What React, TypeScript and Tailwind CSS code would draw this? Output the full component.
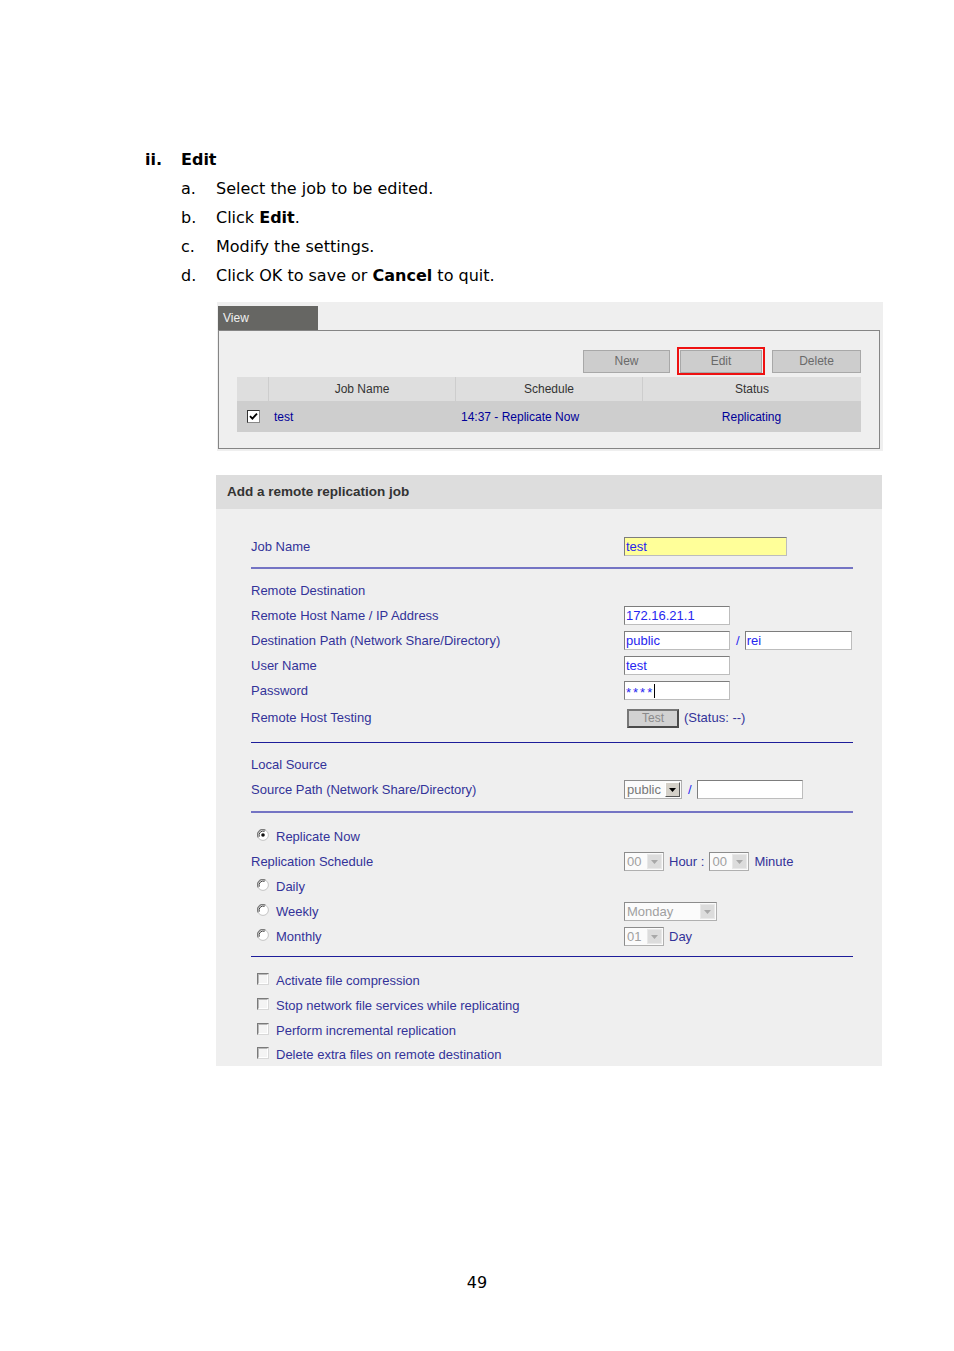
import React from 'react';

const Radio = ({ checked = false }: { checked?: boolean }) => (
  <svg width="12" height="12" viewBox="0 0 12 12" className="shrink-0">
    <circle cx="6" cy="6" r="5.4" fill="#fff" stroke="#c4c4c4" strokeWidth="1" />
    <path d="M1.2 8.4 A5.3 5.3 0 0 1 8.4 1.2" stroke="#7c7c7c" strokeWidth="1.2" fill="none" />
    <path d="M2.3 7.6 A4.1 4.1 0 0 1 7.6 2.3" stroke="#3c3c3c" strokeWidth="1" fill="none" />
    {checked && <circle cx="6" cy="6" r="1.8" fill="#111" />}
  </svg>
);

const Check = () => (
  <div className="h-[12px] w-[12px] shrink-0 border border-t-[#7a7a7a] border-l-[#7a7a7a] border-r-[#d8d8d8] border-b-[#d8d8d8] bg-[#f4f4f4]">
    <div className="h-full w-full border border-t-[#b8b8b8] border-l-[#b8b8b8] border-r-white border-b-white" />
  </div>
);

const Arrow = ({ dark = false }: { dark?: boolean }) => (
  <svg width="7" height="4" viewBox="0 0 7 4">
    <path d="M0 0 H7 L3.5 4 Z" fill={dark ? '#000' : '#a8a8a8'} />
  </svg>
);

const Select = ({ value, className, enabled = false }: { value: string; className: string; enabled?: boolean }) => (
  <div className={`flex h-[19px] items-center border border-[#b0b0b0] border-t-[#8c8c8c] border-l-[#8c8c8c] bg-[#fbfbfb] ${className}`}>
    <span className={`flex-1 pl-[2px] text-[13px] leading-none ${enabled ? 'text-[#777]' : 'text-[#a0a0a0]'}`}>{value}</span>
    {enabled ? (
      <span className="m-[1px] flex h-[15px] w-[15px] items-center justify-center border border-t-white border-l-white border-r-[#555] border-b-[#555] bg-[#d4d0c8]">
        <Arrow dark />
      </span>
    ) : (
      <span className="m-[1px] flex h-[15px] w-[15px] items-center justify-center border border-[#e8e8e8] bg-[#dcdcdc]">
        <Arrow />
      </span>
    )}
  </div>
);

const TextBox = ({ value, className, bg = 'bg-white' }: { value?: React.ReactNode; className: string; bg?: string }) => (
  <div className={`flex h-[19px] items-center border border-[#bdbdbd] border-t-[#7d7d7d] border-l-[#7d7d7d] pl-[1px] text-[13px] leading-none text-[#2626f0] ${bg} ${className}`}>
    {value}
  </div>
);

const Line = ({ dark = false }: { dark?: boolean }) => (
  <div className={`w-[602px] ${dark ? 'h-[1px] bg-[#1d1d9a]' : 'h-[2px] bg-[#7474c4]'}`} />
);

const Row = ({ label, children, className = 'h-[25px]' }: { label: React.ReactNode; children?: React.ReactNode; className?: string }) => (
  <div className={`flex items-center ${className}`}>
    <div className="flex w-[373px] items-center">{label}</div>
    <div className="flex items-center">{children}</div>
  </div>
);

const Option = ({ text, radio, checked }: { text: string; radio?: boolean; checked?: boolean }) => (
  <div className="flex items-center pl-[6px]">
    <span className="-mt-[3px]">{radio ? <Radio checked={checked} /> : <Check />}</span>
    <span className="ml-[7px]">{text}</span>
  </div>
);

const ViewPanel = () => (
  <div className="ml-[217px] mt-[12px] h-[149px] w-[666px] bg-[#efefef] pl-[1px] pt-[4px] font-['Liberation_Sans',Arial,sans-serif] text-[12px]">
    <div className="flex h-[24px] w-[100px] items-center bg-[#666663] pl-[5px] text-[#f0f0f0]">View</div>
    <div className="h-[119px] w-[662px] border border-[#858585] px-[18px] pt-[16px]">
      <div className="flex h-[28px] items-center justify-end">
        <div className="flex h-[23px] w-[87px] items-center justify-center border border-[#a8a8a8] bg-[#cdcdcd] text-[#6a6a6a]">New</div>
        <div className="ml-[7px] flex h-[28px] w-[88px] items-center justify-center border-2 border-[#ee1111]">
          <div className="flex h-[23px] w-[82px] items-center justify-center border border-[#a8a8a8] bg-[#cdcdcd] text-[#6a6a6a]">Edit</div>
        </div>
        <div className="ml-[7px] flex h-[23px] w-[89px] items-center justify-center border border-[#a8a8a8] bg-[#cdcdcd] text-[#6a6a6a]">Delete</div>
      </div>
      <div className="mt-[2px] w-[624px]">
        <div className="grid h-[24px] grid-cols-[31px_187px_187px_219px] bg-[#dedede] text-[#333]">
          <div />
          <div className="flex items-center justify-center border-l border-[#cdcdcd]">Job Name</div>
          <div className="flex items-center justify-center border-l border-[#cdcdcd]">Schedule</div>
          <div className="flex items-center justify-center border-l border-[#cdcdcd]">Status</div>
        </div>
        <div className="grid h-[31px] grid-cols-[31px_187px_187px_219px] bg-[#cecece] text-[#000099]">
          <div className="flex items-center pl-[10px]">
            <div className="flex h-[13px] w-[13px] items-center justify-center border border-[#333] border-r-[#888] border-b-[#888] bg-white">
              <svg width="9" height="9" viewBox="0 0 9 9">
                <path d="M1 4.2 L3.4 6.6 L8 1.6" stroke="#000" strokeWidth="1.8" fill="none" />
              </svg>
            </div>
          </div>
          <div className="flex items-center pl-[6px]">test</div>
          <div className="flex items-center pl-[6px]">14:37 - Replicate Now</div>
          <div className="flex items-center justify-center">Replicating</div>
        </div>
      </div>
    </div>
  </div>
);

const JobPanel = () => (
  <div className="ml-[216px] mt-[24px] w-[666px] bg-[#efefef] font-['Liberation_Sans',Arial,sans-serif] text-[13px] text-[#333399]">
    <div className="flex h-[34px] items-center bg-[#dddddd] pl-[11px] text-[13.5px] font-bold text-[#333]">Add a remote replication job</div>
    <div className="pl-[35px] pt-[25px]">
      <Row label="Job Name">
        <TextBox value="test" className="w-[163px]" bg="bg-[#ffff99]" />
      </Row>
      <div className="mt-[8px]"><Line /></div>
      <div className="mt-[9px]">
        <Row label="Remote Destination" />
        <Row label="Remote Host Name / IP Address">
          <TextBox value="172.16.21.1" className="w-[106px]" />
        </Row>
        <Row label="Destination Path (Network Share/Directory)">
          <TextBox value="public" className="w-[106px]" />
          <span className="ml-[6px] text-[#2626f0]">/</span>
          <TextBox value="rei" className="ml-[5px] w-[107px]" />
        </Row>
        <Row label="User Name">
          <TextBox value="test" className="w-[106px]" />
        </Row>
        <Row label="Password">
          <TextBox
            value={
              <>
                <span className="pt-[4px] text-[13px] tracking-[2px]">****</span>
                <span className="h-[14px] w-[1px] bg-black" />
              </>
            }
            className="w-[106px]"
          />
        </Row>
        <Row label="Remote Host Testing" className="h-[30px]">
          <div className="ml-[3px] flex h-[19px] w-[52px] items-center justify-center border-2 border-[#4a4a4a] border-t-[#777] border-l-[#777] bg-[#d2d2d2] text-[12px] text-[#8a8a8a]">Test</div>
          <span className="ml-[5px]">(Status: --)</span>
        </Row>
      </div>
      <div className="mt-[9px]"><Line dark /></div>
      <div className="mt-[9px]">
        <Row label="Local Source" />
        <Row label="Source Path (Network Share/Directory)">
          <Select value="public" className="w-[58px]" enabled />
          <span className="ml-[6px] text-[#2626f0]">/</span>
          <TextBox className="ml-[5px] w-[106px]" />
        </Row>
      </div>
      <div className="mt-[9px]"><Line /></div>
      <div className="mt-[11px]">
        <Row label={<Option text="Replicate Now" radio checked />} />
        <Row label="Replication Schedule">
          <Select value="00" className="w-[40px]" />
          <span className="ml-[5px]">Hour :</span>
          <Select value="00" className="ml-[5px] w-[40px]" />
          <span className="ml-[5px]">Minute</span>
        </Row>
        <Row label={<Option text="Daily" radio />} />
        <Row label={<Option text="Weekly" radio />}>
          <Select value="Monday" className="w-[93px]" />
        </Row>
        <Row label={<Option text="Monthly" radio />}>
          <Select value="01" className="w-[40px]" />
          <span className="ml-[5px]">Day</span>
        </Row>
      </div>
      <div className="mt-[7px]"><Line dark /></div>
      <div className="mt-[11px]">
        <Row label={<Option text="Activate file compression" />} />
        <Row label={<Option text="Stop network file services while replicating" />} />
        <Row label={<Option text="Perform incremental replication" />} />
        <Row label={<Option text="Delete extra files on remote destination" />} className="h-[23px]" />
      </div>
    </div>
  </div>
);

export default function App() {
  return (
    <div className="min-h-[1351px] w-[954px] bg-white pt-[145px] font-['DejaVu_Sans',Verdana,sans-serif] text-[16px] text-black">
      <div className="flex pl-[145px] font-bold leading-[29px]">
        <span className="w-[36px]">ii.</span>
        <span>Edit</span>
      </div>
      <div className="leading-[29px]">
        <div className="flex pl-[181px]">
          <span className="w-[35px]">a.</span>
          <span>Select the job to be edited.</span>
        </div>
        <div className="flex pl-[181px]">
          <span className="w-[35px]">b.</span>
          <span>
            Click <b>Edit</b>.
          </span>
        </div>
        <div className="flex pl-[181px]">
          <span className="w-[35px]">c.</span>
          <span>Modify the settings.</span>
        </div>
        <div className="flex pl-[181px]">
          <span className="w-[35px]">d.</span>
          <span>
            Click OK to save or <b>Cancel</b> to quit.
          </span>
        </div>
      </div>
      <ViewPanel />
      <JobPanel />
      <div className="mt-[207px] text-center leading-[20px]">49</div>
    </div>
  );
}
